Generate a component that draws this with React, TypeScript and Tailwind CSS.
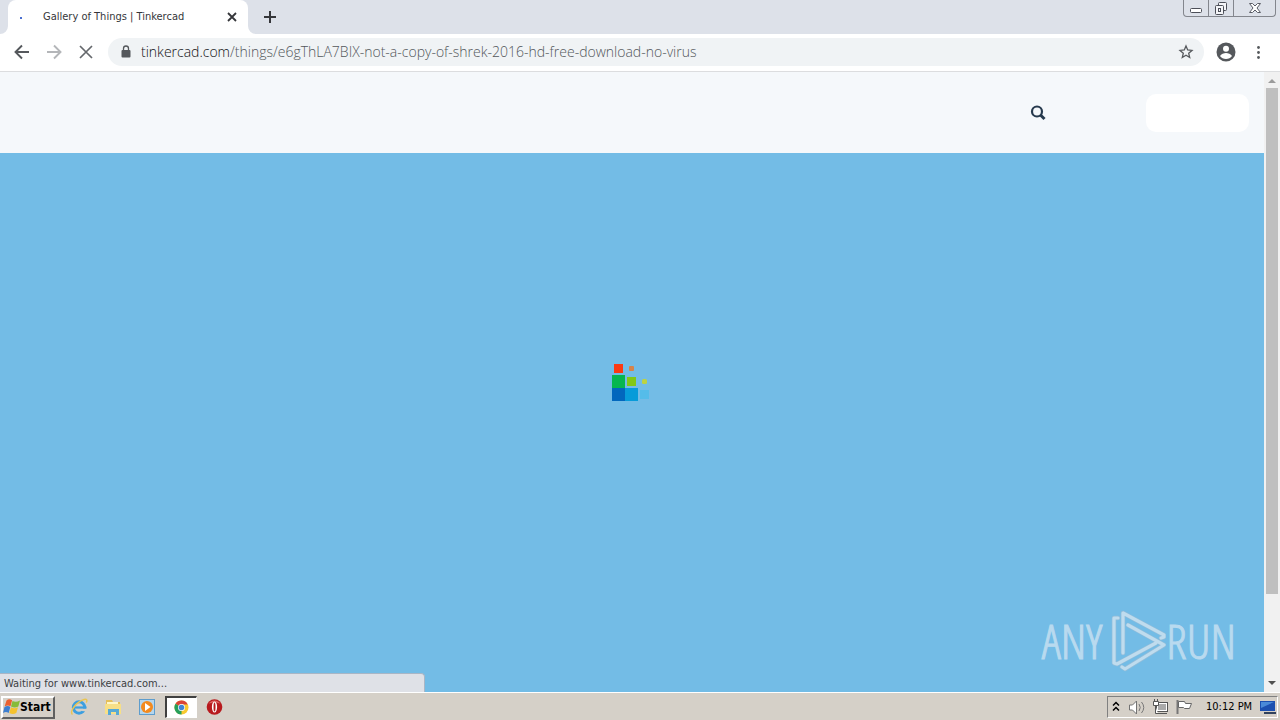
import type { ReactNode } from "react";

const UI = "font-['DejaVu_Sans_Condensed','DejaVu_Sans',sans-serif]";

function TabStrip() {
  return (
    <header className="relative flex h-[34px] shrink-0 items-end bg-[#dde1e9]">
      <svg className="h-[34px] w-2 shrink-0" viewBox="0 0 8 34" aria-hidden="true">
        <path d="M8 26v8H0a8 8 0 0 0 8-8Z" fill="#fff" />
      </svg>
      <div className="flex h-[34px] w-60 items-center rounded-t-lg bg-white pr-2 pl-2">
        <svg className="size-4 shrink-0" viewBox="0 0 16 16" aria-hidden="true">
          <rect x="4" y="8" width="2" height="2" fill="#4a6fd0" />
        </svg>
        <span className={`ml-[11px] flex-1 truncate text-[11px] leading-5 text-[#35363a] ${UI}`}>
          Gallery of Things | Tinkercad
        </span>
        <button type="button" aria-label="Close tab" className="grid size-4 place-items-center">
          <svg className="size-4" viewBox="0 0 16 16">
            <path d="M4 4l8 8M12 4l-8 8" stroke="#35363a" strokeWidth="1.8" />
          </svg>
        </button>
      </div>
      <svg className="h-[34px] w-2 shrink-0" viewBox="0 0 8 34" aria-hidden="true">
        <path d="M0 26v8h8a8 8 0 0 1-8-8Z" fill="#fff" />
      </svg>
      <button type="button" aria-label="New tab" className="mb-[9px] ml-1.5 grid size-4 place-items-center">
        <svg className="size-4" viewBox="0 0 16 16">
          <path d="M8 2v12M2 8h12" stroke="#35363a" strokeWidth="2" />
        </svg>
      </button>
      <div className="mr-1 ml-auto flex h-[17px] self-start rounded-b border border-t-0 border-[#83868d]">
        <button type="button" aria-label="Minimize" className="grid w-[25px] place-items-center border-r border-[#83868d]">
          <svg className="h-4 w-4" viewBox="0 0 16 16">
            <rect x="2.500" y="8.500" width="11" height="4" rx="1" fill="#fff" stroke="#4c4f58" />
          </svg>
        </button>
        <button type="button" aria-label="Restore" className="grid w-[25px] place-items-center border-r border-[#83868d]">
          <svg className="h-4 w-4" viewBox="0 0 16 16" fill="#f4f5f8" stroke="#4c4f58">
            <rect x="5.500" y="2.500" width="8" height="8" rx="1" />
            <rect x="2.500" y="5.500" width="8" height="9" rx="1" />
            <rect x="5.500" y="8.500" width="2" height="3" />
          </svg>
        </button>
        <button type="button" aria-label="Close" className="grid w-[41px] place-items-center">
          <svg className="h-4 w-4" viewBox="0 0 16 16">
            <path
              d="M2.500 3.500h3L8 6l2.500-2.500h3L10 8l3.500 4.500h-3L8 10l-2.500 2.500h-3L6 8Z"
              fill="#fff"
              stroke="#5a5d66"
            />
          </svg>
        </button>
      </div>
    </header>
  );
}

function NavButton({ label, children }: { label: string; children: ReactNode }) {
  return (
    <button type="button" aria-label={label} className="grid size-5 shrink-0 place-items-center">
      <svg className="size-5" viewBox="0 0 20 20" fill="none">
        {children}
      </svg>
    </button>
  );
}

function Toolbar() {
  return (
    <nav className="flex h-[38px] shrink-0 items-center border-b border-[#dcdddf] bg-white pr-3 pb-px pl-3">
      <div className="flex gap-3">
        <NavButton label="Back">
          <path d="M17 10H4M10 3.500L3.500 10l6.500 6.500" stroke="#55585c" strokeWidth="1.900" />
        </NavButton>
        <NavButton label="Forward">
          <path d="M3 10h13M10 3.500l6.500 6.500-6.500 6.500" stroke="#b4b6b9" strokeWidth="1.900" />
        </NavButton>
        <NavButton label="Stop loading">
          <path d="M4 4l12 12M16 4L4 16" stroke="#65686c" strokeWidth="1.700" />
        </NavButton>
      </div>
      <div className="ml-3 flex h-7 min-w-0 flex-1 items-center rounded-full bg-[#f0f3f5] pr-[10px] pl-3">
        <svg className="h-4 w-3 shrink-0" viewBox="0 0 12 16" aria-hidden="true">
          <rect x="1.500" y="6" width="9" height="7.500" rx="1" fill="#55585c" />
          <path d="M3.500 6V4.500a2.500 2.500 0 0 1 5 0V6" fill="none" stroke="#55585c" strokeWidth="1.300" />
        </svg>
        <a
          href="#address"
          className="ml-[9px] min-w-0 flex-1 truncate font-['Open_Sans',sans-serif] text-[14px] leading-5 font-light text-[#53575b]"
        >
          <span className="text-[#101113]">tinkercad.com</span>
          /things/e6gThLA7BIX-not-a-copy-of-shrek-2016-hd-free-download-no-virus
        </a>
        <button type="button" aria-label="Bookmark this page" className="shrink-0">
          <svg className="size-4" viewBox="0 0 16 16">
            <path
              d="M8 2l1.700 4 4.300.4-3.300 2.900 1 4.200L8 11.300l-3.700 2.200 1-4.200L2 6.400 6.300 6Z"
              fill="none"
              stroke="#55585c"
              strokeWidth="1.300"
            />
          </svg>
        </button>
      </div>
      <button type="button" aria-label="Profile" className="ml-3 shrink-0">
        <svg className="size-5" viewBox="0 0 20 20">
          <circle cx="10" cy="10" r="9.500" fill="#55585c" />
          <circle cx="10" cy="6.800" r="3" fill="#fff" />
          <path d="M4 14c1-2 4-3 6-3s5 1 6 3c-1.300 2-3.500 3-6 3s-4.700-1-6-3Z" fill="#fff" />
        </svg>
      </button>
      <button type="button" aria-label="Menu" className="ml-3 shrink-0">
        <svg className="h-5 w-5" viewBox="0 0 20 20" fill="#55585c">
          <circle cx="10.500" cy="5.500" r="1.400" />
          <circle cx="10.500" cy="10.500" r="1.400" />
          <circle cx="10.500" cy="15.500" r="1.400" />
        </svg>
      </button>
    </nav>
  );
}

function Loader() {
  return (
    <svg className="h-10 w-10" viewBox="2 0 40 40" role="img" aria-label="Loading">
      <rect x="4" y="2" width="9" height="9" fill="#fb3912" />
      <rect x="19" y="4" width="5" height="5" rx="1" fill="#d6834b" />
      <rect x="2" y="13" width="13" height="13" fill="#06b650" />
      <rect x="17" y="15" width="9" height="9" fill="#82c815" />
      <rect x="32" y="17" width="5" height="5" rx="1.500" fill="#bdd341" />
      <rect x="2" y="26" width="13" height="13" fill="#0267bd" />
      <rect x="15" y="26" width="13" height="13" fill="#079bd9" />
      <rect x="30" y="28" width="9" height="9" fill="#55bce9" />
    </svg>
  );
}

function Watermark() {
  return (
    <div className="absolute right-11 bottom-5 flex items-center font-['Open_Sans_Condensed_Light','Open_Sans_Condensed','Liberation_Sans_Narrow',sans-serif] text-[48px] leading-[62px] font-light text-[#b9daef] [-webkit-text-stroke:1px_#b9daef]">
      <span>ANY</span>
      <svg className="ml-2 h-[62px] w-14 shrink-0" viewBox="0 0 56 62" fill="none" aria-hidden="true">
        <g stroke="#93bdd9" strokeWidth="4.500" strokeLinejoin="round" strokeLinecap="round">
          <path d="M8 8H4v45l3 1 39-21" />
          <path d="M13 43V3l41 22v2l-3 1" />
          <path d="M18 15l36 20-39 24-3-2" />
        </g>
        <g stroke="#bfdcee" strokeWidth="3.200" strokeLinejoin="round" strokeLinecap="round">
          <path d="M8 8H4v45l3 1 39-21" />
          <path d="M13 43V3l41 22v2l-3 1" />
          <path d="M18 15l36 20-39 24-3-2" />
        </g>
      </svg>
      <span>RUN</span>
    </div>
  );
}

function Page() {
  return (
    <main className="relative flex min-h-0 flex-1">
      <div className="relative flex min-w-0 flex-1 flex-col">
        <div className="flex h-[81px] shrink-0 items-center justify-end gap-[98px] bg-[#f5f8fb] pr-[15px]">
          <button type="button" aria-label="Search" className="grid size-5 place-items-center">
            <svg className="size-5" viewBox="0 0 20 20" fill="none" stroke="#273a4e">
              <circle cx="9" cy="8.500" r="5" strokeWidth="2.200" />
              <path d="M12.500 12l4 4" strokeWidth="3" />
            </svg>
          </button>
          <button type="button" aria-label="Sign in" className="h-[38px] w-[103px] rounded-[10px] bg-white" />
        </div>
        <div className="flex-1 bg-[#73bce6]" />
        <div className="absolute inset-0 grid place-items-center">
          <Loader />
        </div>
      </div>
      <div className="flex w-4 shrink-0 flex-col bg-[#f1f1f1]" aria-hidden="true">
        <svg className="h-4 w-4" viewBox="0 0 16 16">
          <path d="M4 11l4-4 4 4Z" fill="#9b9b9b" />
        </svg>
        <div className="mx-[2px] flex-[506] bg-[#bfbfbf]" />
        <div className="flex-[81]" />
        <svg className="h-[17px] w-4" viewBox="0 0 16 17">
          <path d="M4 6h8l-4 4Z" fill="#505050" />
        </svg>
      </div>
      <div
        role="status"
        className={`absolute bottom-0 left-0 h-[19px] w-[425px] rounded-tr border-t border-r border-[#a9b6c6] bg-[#dfe1e7] pl-1 text-[11px] leading-5 text-[#3c4043] ${UI}`}
      >
        Waiting for www.tinkercad.com...
      </div>
      <Watermark />
    </main>
  );
}

function TaskIcon({ label, active, children }: { label: string; active?: boolean; children: ReactNode }) {
  return (
    <button
      type="button"
      aria-label={label}
      className={
        active
          ? "grid h-[22px] w-8 place-items-center border border-t-2 border-l-2 border-t-[#404040] border-r-white border-b-white border-l-[#404040] bg-white"
          : "grid h-[22px] w-8 place-items-center"
      }
    >
      <svg className="size-[18px]" viewBox="0 0 18 18">
        {children}
      </svg>
    </button>
  );
}

function Taskbar() {
  return (
    <footer className={`flex h-7 shrink-0 items-center border-t border-white bg-[#d5d0c8] pt-px ${UI}`}>
      <button
        type="button"
        className="ml-px flex h-[23px] w-[54px] items-center border-t-2 border-r-2 border-b-2 border-l-2 border-t-white border-r-[#606060] border-b-[#606060] border-l-white bg-[#d5d0c8] text-[12px] font-bold text-black"
      >
        <svg className="h-[18px] w-[17px] shrink-0" viewBox="0 0 17 18" aria-hidden="true">
          <path d="M3.500 2.500c2-1.800 3.800-1.500 5.600-.2L7.500 8.300c-1.700-1.200-3.700-1-5.800 0Z" fill="#ea6030" />
          <path d="M9.500 3c2.500 1.200 4.700 1 7.500-.5L15.300 8.500c-2.700 1.500-4.800 1.300-7.300 0Z" fill="#86bb3a" />
          <path d="M1.500 9c2.200-1.200 4.200-1.200 5.800 0L5.700 15c-2-1.400-3.700-1.200-5.700 0Z" fill="#3c7ed0" />
          <path d="M8 9.300c2.500 1.200 4.600 1.200 7 0L13.300 15c-2.500 1.500-4.600 1.400-7 0Z" fill="#f5c22e" />
        </svg>
        Start
      </button>
      <div className="ml-2 flex gap-[2px]">
        <TaskIcon label="Internet Explorer">
          <circle cx="9" cy="9.500" r="5.700" fill="none" stroke="#3d9fe0" strokeWidth="3" />
          <path d="M9.500 10.500h8v3l-6-.5Z" fill="#d5d0c8" />
          <path d="M5 9.500h11.500" stroke="#3d9fe0" strokeWidth="2.200" />
          <path d="M2.500 16.500C-1 14 6 4 14 1.500c3-.8 3.500 1 2.200 3" fill="none" stroke="#eac552" strokeWidth="1.400" />
        </TaskIcon>
        <TaskIcon label="File Explorer">
          <path d="M2 2h6l1 2h7v12H2Z" fill="#e5bf59" />
          <path d="M3 4h11v3H3Z" fill="#fff6c7" />
          <path d="M1 6h16v10H1Z" fill="#f7df87" />
          <path d="M4 17v-6h11v6h-3v-3H7v3Z" fill="#57a9d5" />
        </TaskIcon>
        <TaskIcon label="Media Player">
          <rect x="1.500" y="1.500" width="15" height="15" fill="#b5d6ed" stroke="#5e9dcd" />
          <circle cx="9" cy="9" r="6" fill="#f38a1e" />
          <path d="M7 5l5.500 4L7 13Z" fill="#fff" />
        </TaskIcon>
        <TaskIcon label="Chrome" active>
          <circle cx="8.500" cy="8.500" r="7" fill="#f8c92f" />
          <path d="M8.500 8.500L2.500 4.800A7 7 0 0 1 14.700 5.500H8.500Z" fill="#db4437" />
          <path d="M2.500 4.800L8.500 8.500v7A7 7 0 0 1 2.500 4.800Z" fill="#269f5b" />
          <circle cx="8.500" cy="8.500" r="3.500" fill="#fff" />
          <circle cx="8.500" cy="8.500" r="2.800" fill="#4285d4" />
        </TaskIcon>
        <TaskIcon label="Opera">
          <circle cx="8.500" cy="9" r="7.800" fill="#b81a1e" />
          <path d="M2.500 6a7 7 0 0 1 12 0c-3-2-9-2-12 0Z" fill="#dc6262" />
          <ellipse cx="8.500" cy="9" rx="2.600" ry="5.500" fill="#fff" />
          <ellipse cx="8.500" cy="9" rx="1" ry="4.500" fill="#b81a1e" />
        </TaskIcon>
      </div>
      <div className="mr-[2px] ml-auto flex h-[22px] items-center border border-t-[#808080] border-r-white border-b-white border-l-[#808080] pl-[3px] text-[11px] text-black">
        <button type="button" aria-label="Show hidden icons" className="w-[10px]">
          <svg className="h-3 w-[10px]" viewBox="0 0 10 12" fill="none" stroke="#000" strokeWidth="1.500">
            <path d="M2 4.500l3-3 3 3M2 9.500l3-3 3 3" />
          </svg>
        </button>
        <svg className="ml-1 h-[18px] w-[22px]" viewBox="0 0 22 18" role="img" aria-label="Volume">
          <path d="M4.500 7h3l4-4v13l-4-4h-3Z" fill="#fff" stroke="#737373" />
          <path d="M14 6q2.500 3.500 0 7M16.500 4q4.500 5.500 0 11" fill="none" stroke="#777" />
        </svg>
        <svg className="ml-[3px] h-[18px] w-5" viewBox="0 0 20 18" role="img" aria-label="Network">
          <rect x="6.500" y="4.500" width="11" height="9" fill="#fff" stroke="#555" />
          <rect x="8" y="6" width="8" height="6" fill="#aaa" />
          <path d="M8 15.500h9" stroke="#555" />
          <path d="M4.500 1v3M7.500 1v3" stroke="#555" />
          <path d="M3.500 3.500h5v4h-5ZM5.500 8v7.500H8" fill="#fff" stroke="#555" />
        </svg>
        <svg className="ml-1 h-[18px] w-5" viewBox="0 0 20 18" role="img" aria-label="Action center">
          <path d="M3.500 2v14" stroke="#777" strokeWidth="2" />
          <path d="M4.500 3.500h6l1 2h6l-2 5h-5l-1-1h-5Z" fill="#fff" stroke="#666" />
        </svg>
        <time className="ml-3 w-[47px] whitespace-nowrap">10:12 PM</time>
        <svg className="ml-[6px] h-[18px] w-[18px]" viewBox="0 0 18 18" role="img" aria-label="Show desktop">
          <path d="M1 3h15v10H1Z" fill="#1c50b0" />
          <path d="M2 4h13L2 10Z" fill="#4a8ad8" />
          <path d="M5 14h12v2H5Z" fill="#31425d" />
        </svg>
      </div>
    </footer>
  );
}

export default function App() {
  return (
    <div className="flex h-screen flex-col overflow-hidden bg-white">
      <TabStrip />
      <Toolbar />
      <Page />
      <Taskbar />
    </div>
  );
}
